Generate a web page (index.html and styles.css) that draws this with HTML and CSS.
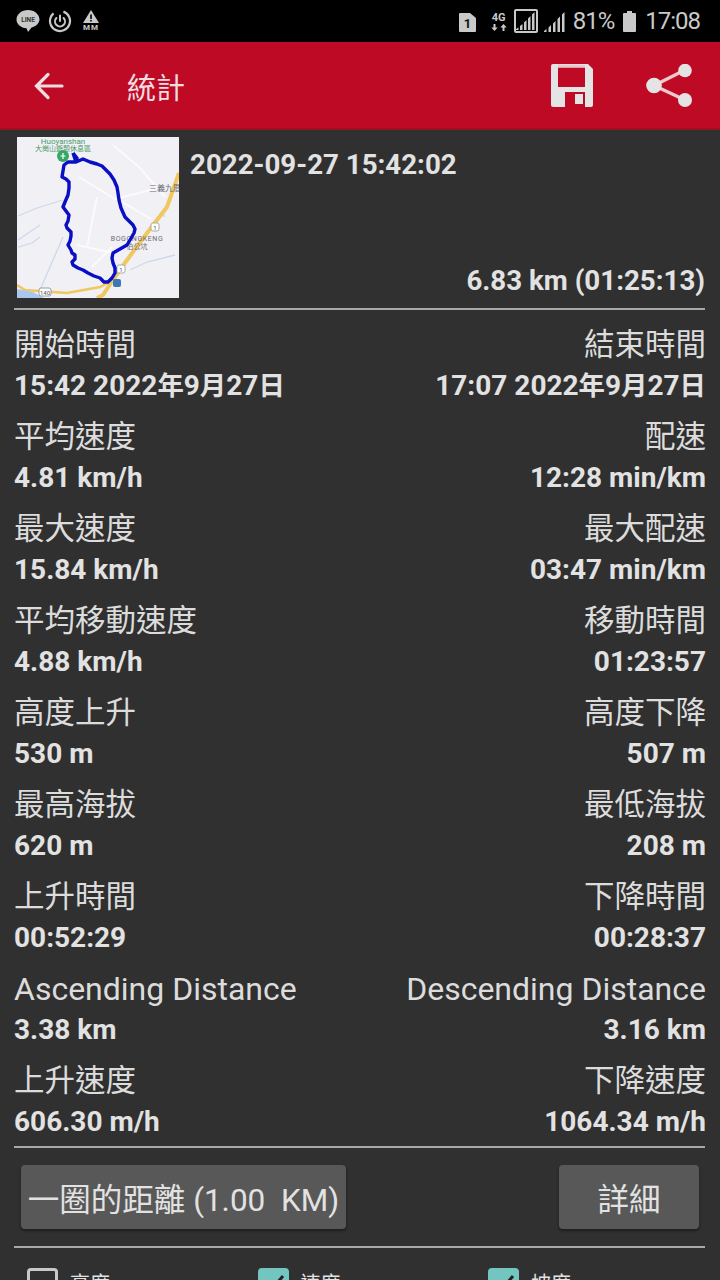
FILE: index.html
```html
<!DOCTYPE html>
<html lang="zh-TW">
<head>
  <meta charset="UTF-8" />
  <title>統計</title>
  <meta name="viewport" content="width=device-width, initial-scale=1.0" />
  <link rel="stylesheet" href="styles.css">
</head>
<body>

  <!-- Status bar -->
  <div class="statusbar">
    <div class="status-left">
      <svg width="24" height="24" viewBox="0 0 24 24"><path fill="#c9c9c9" d="M12 1C5.800 1 .5 5.200.5 10.400c0 4.800 4.400 8.400 10 8.800l1.500 3.800 3.600-4.400C20 17.200 23.500 14 23.500 10.400 23.500 5.200 18.200 1 12 1z"/><text x="12" y="13" class="line-txt">LINE</text></svg>
      <svg width="24" height="24" viewBox="0 0 24 24" fill="none" stroke="#c9c9c9"><circle cx="12" cy="12" r="10" stroke-width="2.200" stroke-dasharray="52 11" transform="rotate(-70 12 12)"/><path stroke-width="2" stroke-linecap="round" d="M12 6.500v5.500M8.400 9a5 5 0 1 0 7.200 0"/></svg>
      <div class="mm">
        <svg width="16" height="13" viewBox="0 0 16 13"><path fill="#c9c9c9" d="M8 0l8 13H0z"/><path fill="#000" d="M7.200 4.500h1.600v4.500H7.200zM7.200 10h1.600v1.500H7.200z"/></svg>
        <span>MM</span>
      </div>
    </div>
    <div class="status-right">
      <svg class="sim" width="17" height="19" viewBox="0 0 17 19"><path fill="#c9c9c9" d="M1 0h10l6 5v13a1 1 0 0 1-1 1H1a1 1 0 0 1-1-1V1a1 1 0 0 1 1-1z"/><text x="8.500" y="15" class="sim-txt">1</text></svg>
      <div class="net">
        <span>4G</span>
        <svg width="16" height="7" viewBox="0 0 16 7"><path fill="#c9c9c9" d="M2.500 0h2v3.500h2.200L3.500 7 .3 3.500h2.200z"/><path fill="#c9c9c9" d="M11.500 7h2V3.500h2.200L12.500 0 9.300 3.500h2.200z"/></svg>
      </div>
      <div class="sig-box">
        <svg width="19" height="20" viewBox="0 0 19 20"><path fill="#c9c9c9" d="M0 19h2.500v-2.500L0 18zM4 19h2.500v-6L4 15zM8 19h2.500V9L8 11.500zM12 19h2.500V5L12 7.500zM16 19h2.500V1L16 3.500z"/></svg>
      </div>
      <svg class="sig" width="21" height="21" viewBox="0 0 21 21"><path fill="#c9c9c9" d="M0 21h2.500v-3L0 20zM4.500 21H7v-7l-2.500 2.500zM9 21h2.500V10L9 12.500zM13.500 21H16V5.500L13.500 8zM18 21h2.500V1L18 3.500z"/></svg>
      <span class="pct">81%</span>
      <svg class="batt" width="13" height="21" viewBox="0 0 13 21"><path fill="#c9c9c9" d="M4 0h5v2h3a1 1 0 0 1 1 1v17a1 1 0 0 1-1 1H1a1 1 0 0 1-1-1V3a1 1 0 0 1 1-1h3z"/></svg>
      <span class="clock">17:08</span>
    </div>
  </div>

  <!-- Toolbar -->
  <header class="toolbar">
    <svg class="back" width="30" height="28" viewBox="0 0 30 28" fill="none" stroke="#f0dde0" stroke-width="3.200" stroke-linecap="round"><path d="M2.500 14H28M14 2.500L2.500 14 14 25.500"/></svg>
    <h1 class="title">統計</h1>
    <div class="actions">
      <svg width="42" height="43" viewBox="0 0 42 43"><path fill="#e4e4e4" fill-rule="evenodd" d="M2 0h35l5 5v36a2 2 0 0 1-2 2H2a2 2 0 0 1-2-2V2a2 2 0 0 1 2-2zM7 3.500V23h27V3.500zM14 28v15h20V28z"/><path fill="#e4e4e4" d="M24 30h8v10h-8z"/><path fill="#f0c4ca" d="M7 1h27v2.500H7z"/></svg>
      <svg width="47" height="43" viewBox="0 0 47 43"><path stroke="#f0c8cc" stroke-width="3.400" d="M8 21.500L39 6M8 21.500L39 36" fill="none"/><circle fill="#e4e4e4" cx="8" cy="21.500" r="7.800"/><circle fill="#e4e4e4" cx="39" cy="6.500" r="6.800"/><circle fill="#e4e4e4" cx="39" cy="36" r="7"/></svg>
    </div>
  </header>

  <main class="content">
    <!-- Map + date -->
    <section class="summary">
      <svg class="map" width="162" height="161" viewBox="0 0 162 161">
        <rect width="162" height="161" fill="#f1f0f5"/>
        <!-- small roads -->
        <path d="M62 40l36 22 40-10M80 60l-10 50M96 8l26 22 26 30M100 62l34 20M60 108l36 8M75 130l20-20" fill="none" stroke="#fbfbfd" stroke-width="2"/>
        <!-- rivers -->
        <path d="M1 79l19-8 26-8M1 103l22-15M1 110l14-4 8-6M46 100l-10 23-13 30M113 133l17-8 28-7M147 72v8" fill="none" stroke="#ccd9ec" stroke-width="1.300"/>
        <!-- highway -->
        <path d="M162 36l-12 34-20 26-20 27-14 20-10 15-6 3" fill="none" stroke="#f0c860" stroke-width="4"/>
        <path d="M0 148l8 5 42 3 33-6 13-7" fill="none" stroke="#f0c860" stroke-width="2.500"/>
        <path d="M0 152l16 3 11 6H0z" fill="#a8c6ee"/>
        <!-- markers -->
        <rect x="22" y="151" width="12" height="8" rx="2" fill="#fff" stroke="#888" stroke-width=".8"/>
        <text x="28" y="157.500" class="map-t map-tiny">140</text>
        <rect x="134" y="86" width="8" height="8" rx="2" fill="#fff" stroke="#999" stroke-width=".8"/>
        <text x="138" y="92.500" class="map-t map-tiny">1</text>
        <rect x="100" y="128" width="8" height="8" rx="2" fill="#fff" stroke="#999" stroke-width=".8"/>
        <text x="104" y="134.500" class="map-t map-tiny">1</text>
        <rect x="96" y="142" width="8" height="8" rx="2" fill="#3b78b5"/>
        <circle cx="46" cy="19" r="6" fill="#34a864"/>
        <path d="M46 16v6M43.500 19h5" stroke="#fff" stroke-width="1.200"/>
        <text x="46" y="7" class="map-t map-green">Huoyanshan</text>
        <text x="46" y="13.500" class="map-t map-green map-small">大崗山遊憩休息區</text>
        <text x="148" y="54" class="map-t map-grey">三義九厝</text>
        <text x="120" y="104" class="map-t map-grey map-mid">BOGONGKENG</text>
        <text x="120" y="112" class="map-t map-grey map-small">伯公坑</text>
        <!-- route -->
        <polyline points="56,16 60,21 59,25 66,22 73,25 80,27 85,29 89,33 93,37 97,43 100,50 101,56 102,63 104,71 108,80 112,84 116,88 118,92 117,96 113,103 110,108 103,112 96,116 95,121 96,126 98,131 98,136 95,141 91,145 87,145 83,141 77,139 71,136 66,133 61,131 56,128 55,125 58,122 58,118 55,116 54,113 51,108 53,104 54,99 54,95 50,91 49,88 51,84 52,78 49,74 46,70 48,65 51,58 52,51 52,45 49,42 45,40 46,34 47,28 51,25 59,25 56,16" fill="none" stroke="#0a0ec4" stroke-width="3.400" stroke-linejoin="round"/>
      </svg>
      <div class="summary-text">
        <div class="date">2022-09-27 15:42:02</div>
        <div class="dist">6.83 km (01:25:13)</div>
      </div>
    </section>
    <hr class="rule" />

    <section class="stats">
      <div class="cell"><div class="lbl">開始時間</div><div class="val">15:42 2022<span class="cjk">年</span>9<span class="cjk">月</span>27<span class="cjk">日</span></div></div>
      <div class="cell end"><div class="lbl">結束時間</div><div class="val">17:07 2022<span class="cjk">年</span>9<span class="cjk">月</span>27<span class="cjk">日</span></div></div>
      <div class="cell"><div class="lbl">平均速度</div><div class="val">4.81 km/h</div></div>
      <div class="cell end"><div class="lbl">配速</div><div class="val">12:28 min/km</div></div>
      <div class="cell"><div class="lbl">最大速度</div><div class="val">15.84 km/h</div></div>
      <div class="cell end"><div class="lbl">最大配速</div><div class="val">03:47 min/km</div></div>
      <div class="cell"><div class="lbl">平均移動速度</div><div class="val">4.88 km/h</div></div>
      <div class="cell end"><div class="lbl">移動時間</div><div class="val">01:23:57</div></div>
      <div class="cell"><div class="lbl">高度上升</div><div class="val">530 m</div></div>
      <div class="cell end"><div class="lbl">高度下降</div><div class="val">507 m</div></div>
      <div class="cell"><div class="lbl">最高海拔</div><div class="val">620 m</div></div>
      <div class="cell end"><div class="lbl">最低海拔</div><div class="val">208 m</div></div>
      <div class="cell"><div class="lbl">上升時間</div><div class="val">00:52:29</div></div>
      <div class="cell end"><div class="lbl">下降時間</div><div class="val">00:28:37</div></div>
      <div class="cell"><div class="lbl lbl-en">Ascending Distance</div><div class="val">3.38 km</div></div>
      <div class="cell end"><div class="lbl lbl-en">Descending Distance</div><div class="val">3.16 km</div></div>
      <div class="cell"><div class="lbl">上升速度</div><div class="val">606.30 m/h</div></div>
      <div class="cell end"><div class="lbl">下降速度</div><div class="val">1064.34 m/h</div></div>
    </section>
    <hr class="rule rule-stats" />

    <div class="buttons">
      <button class="btn btn-lap">一圈的距離 (1.00&nbsp; KM)</button>
      <button class="btn btn-detail">詳細</button>
    </div>
    <hr class="rule" />

    <div class="checks">
      <label class="check"><span class="box"></span><span class="check-txt">高度</span></label>
      <label class="check"><span class="box on"><svg width="31" height="31" viewBox="0 0 31 31"><path d="M7 16l6 6 12-14" fill="none" stroke="#222" stroke-width="3"/></svg></span><span class="check-txt">速度</span></label>
      <label class="check"><span class="box on"><svg width="31" height="31" viewBox="0 0 31 31"><path d="M7 16l6 6 12-14" fill="none" stroke="#222" stroke-width="3"/></svg></span><span class="check-txt">坡度</span></label>
    </div>
  </main>

</body>
</html>
```

FILE: styles.css
```css
* { box-sizing: border-box; margin: 0; padding: 0; }

html, body {
  width: 720px;
  height: 1280px;
  overflow: hidden;
}

body {
  background: #303030;
  color: #e2e2e2;
  font-family: Roboto, "Noto Sans CJK TC", sans-serif;
}

/* Status bar */
.statusbar {
  height: 42px;
  background: #000;
  color: #c9c9c9;
  display: flex;
  justify-content: space-between;
  align-items: center;
  padding: 0 20px 0 16px;
}
.status-left, .status-right {
  display: flex;
  align-items: center;
}
.status-left { gap: 8px; }
.line-txt {
  font: 700 6.500px Roboto, sans-serif;
  fill: #333;
  text-anchor: middle;
}
.sim-txt {
  font: 700 13px Roboto, sans-serif;
  fill: #111;
  text-anchor: middle;
}
.mm {
  display: flex;
  flex-direction: column;
  align-items: center;
  font-size: 8px;
  font-weight: 700;
  letter-spacing: 1px;
  line-height: 9px;
  margin-left: 3px;
}
.sim { margin-top: 2px; }
.net {
  display: flex;
  flex-direction: column;
  align-items: center;
  width: 16px;
  margin-left: 15px;
  font-size: 11px;
  font-weight: 700;
  line-height: 12px;
}
.sig-box {
  width: 24px;
  height: 24px;
  margin-left: 7px;
  border: 2px solid #c9c9c9;
  border-radius: 2px;
  display: flex;
  align-items: flex-end;
  justify-content: center;
}
.sig { margin-left: 6px; }
.pct {
  margin-left: 8px;
  font-size: 24px;
  letter-spacing: -1px;
  line-height: 42px;
}
.batt { margin-left: 9px; }
.clock {
  margin-left: 9px;
  font-size: 24px;
  letter-spacing: -1px;
  line-height: 42px;
}

/* Toolbar */
.toolbar {
  height: 88px;
  background: #bf0a26;
  border-bottom: 2px solid #9c1020;
  display: flex;
  align-items: center;
  padding: 0 27px 0 34px;
}
.back { margin-top: 2px; }
.title {
  font-size: 29px;
  font-weight: 400;
  color: #f0dde0;
  margin-left: 63px;
  margin-top: 2px;
}
.actions {
  margin-left: auto;
  display: flex;
  align-items: center;
  gap: 53px;
}

/* Content */
.content { padding: 7px 15px 0 14px; }

.summary {
  display: flex;
  padding-left: 3px;
  height: 161px;
}
.map { flex: none; }
.summary-text {
  flex: 1;
  display: flex;
  flex-direction: column;
  justify-content: space-between;
  margin-left: 11px;
  font-size: 27.700px;
  font-weight: 700;
  line-height: 32px;
  padding: 12px 0 1px;
}
.dist { text-align: right; }

.map-t {
  font-family: Roboto, "Noto Sans CJK TC", sans-serif;
  font-size: 8px;
  text-anchor: middle;
}
.map-small { font-size: 7px; }
.map-mid { font-size: 7px; letter-spacing: .6px; }
.map-tiny { font-size: 6px; fill: #555; }
.map-green { fill: #4a9a6c; }
.map-grey { fill: #6a6a72; }

.rule {
  border: none;
  height: 2px;
  background: #a8a8a8;
}
.summary + .rule { margin-top: 10px; }

.stats {
  display: grid;
  grid-template-columns: 1fr 1fr;
  grid-auto-rows: 78px;
  row-gap: 14px;
  padding-top: 14px;
}
.cell { white-space: nowrap; }
.cell.end { text-align: right; margin-right: -1px; }
.lbl {
  font-size: 30.500px;
  line-height: 42px;
  margin-bottom: 2px;
  font-weight: 400;
  color: #dcdcdc;
}
.lbl-en { font-size: 32px; }
.val {
  font-size: 28px;
  line-height: 36px;
  font-weight: 700;
}
.cjk { font-size: 26.400px; }

.rule-stats { margin-top: 8px; }

.buttons {
  display: flex;
  justify-content: space-between;
  padding: 17px 6px 17px 7px;
}
.btn {
  height: 64px;
  background: #585858;
  color: #e2e2e2;
  border: none;
  border-radius: 4px;
  font-family: Roboto, "Noto Sans CJK TC", sans-serif;
  font-size: 31.500px;
  font-weight: 400;
  box-shadow: 0 2px 3px rgba(0,0,0,0.4);
  white-space: nowrap;
}
.btn-lap { width: 325px; }
.btn-detail { width: 140px; }

.checks {
  display: flex;
  padding: 20px 0 0 13px;
}
.check {
  flex: none;
  width: 230.500px;
  display: flex;
  align-items: flex-start;
  gap: 12px;
  font-size: 20px;
  line-height: 20px;
}
.check-txt { margin-top: 6px; }
.box {
  width: 31px;
  height: 31px;
  flex: none;
  border: 3px solid #c8c8c8;
  border-radius: 4px;
}
.box.on {
  background: #73c6c0;
  border: none;
}
```
